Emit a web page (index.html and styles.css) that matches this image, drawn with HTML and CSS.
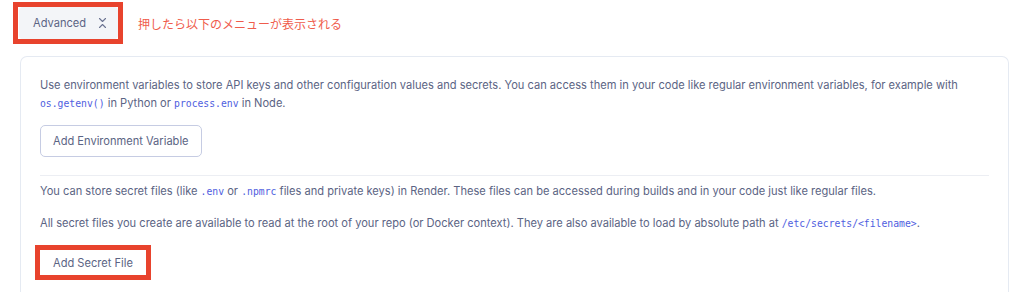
FILE: index.html
```html
<!DOCTYPE html>
<html lang="en">
<head>
    <meta charset="UTF-8">
    <meta name="viewport" content="width=device-width, initial-scale=1.0">
    <title>Advanced settings</title>
    <link rel="stylesheet" href="styles.css">
</head>
<body>
    <div class="toolbar">
        <span class="marked mark-advanced">
            <button class="btn-advanced" type="button">
                Advanced
                <svg class="chev" width="9" height="12" viewBox="0 0 9 12" fill="none" stroke="currentColor" stroke-width="1.1" stroke-linecap="round" stroke-linejoin="round">
                    <path d="M1.5 1.5l3 3 3-3"/>
                    <path d="M1.5 10.5l3-3 3 3"/>
                </svg>
            </button>
        </span>
        <span class="note">押したら以下のメニューが表示される</span>
    </div>

    <div class="card">
        <p>Use environment variables to store API keys and other configuration values and secrets. You can access them in your code like regular environment variables, for example with <code>os.getenv()</code> in Python or <code>process.env</code> in Node.</p>
        <button class="btn" type="button">Add Environment Variable</button>

        <hr class="divider">

        <p>You can store secret files (like <code>.env</code> or <code>.npmrc</code> files and private keys) in Render. These files can be accessed during builds and in your code just like regular files.</p>
        <p class="spaced">All secret files you create are available to read at the root of your repo (or Docker context). They are also available to load by absolute path at <code>/etc/secrets/&lt;filename&gt;</code>.</p>
        <span class="marked mark-secret">
            <button class="btn btn-secret" type="button">Add Secret File</button>
        </span>
    </div>
</body>
</html>
```

FILE: styles.css
```css
body {
    margin: 0;
    padding: 2px 0 0 13px;
    font-family: Inter, "Noto Sans", sans-serif;
    color: #5b6484;
    background: #fff;
}

.toolbar {
    display: flex;
    align-items: center;
    gap: 15px;
}

button {
    font-family: inherit;
    font-size: 11.1px;
    color: #5b6484;
    cursor: pointer;
}

/* red boxes drawn on the screenshot */
.marked {
    display: inline-flex;
    border: 5px solid #e8432d;
}

.mark-advanced {
    padding-left: 1px;
}

.btn-advanced {
    display: flex;
    align-items: center;
    gap: 12px;
    height: 32px;
    width: 99px;
    padding: 0 0 0 14px;
    border: none;
    border-radius: 4px;
    background: #f3f5f8;
}

.chev {
    color: #6b7391;
}

.note {
    font-family: "Noto Sans CJK JP", sans-serif;
    font-size: 12px;
    color: #ef5c4c;
}

.card {
    margin: 12px 15px 0 7px;
    padding: 19px 19px 12px;
    border: 1px solid #e5eaf2;
    border-bottom: none;
    border-radius: 7px 7px 0 0;
}

p {
    margin: 0;
    font-size: 11.1px;
    line-height: 18px;
}

p.spaced {
    margin-top: 13px;
}

code {
    font-family: "DejaVu Sans Mono", monospace;
    font-size: 9.75px;
    color: #4f5ee0;
}

.btn {
    display: block;
    height: 32px;
    margin-top: 12px;
    padding: 0 12px;
    border: 1px solid #c6cce3;
    border-radius: 5px;
    background: #fff;
}

.mark-secret {
    margin: 12px 0 0 -5px;
}

.btn-secret {
    height: 25px;
    margin: 0;
    padding: 0 13px;
    border: none;
    border-radius: 0;
}

.divider {
    margin: 18px 0 6px;
    border: none;
    border-top: 1px solid #eceef3;
}
```
